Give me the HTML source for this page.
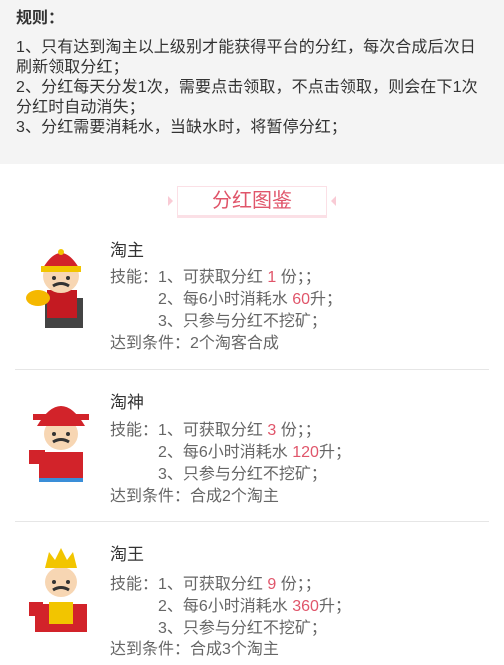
<!DOCTYPE html>
<html><head><meta charset="utf-8"><style>
*{margin:0;padding:0;box-sizing:border-box}
body{width:504px;height:665px;overflow:hidden;background:#fff;font-family:"Liberation Sans","Noto Sans CJK SC",sans-serif;color:#333}
.rules{background:#f4f4f4;height:164px;padding:8px 16px 0 16px}
.rules h3{font-size:16px;font-weight:bold;line-height:22px;color:#333}
.rules p{font-size:16px;line-height:20px;margin-top:8px;color:#333;white-space:nowrap;letter-spacing:0.1px}
.head{position:relative;height:60px}
.box{position:absolute;left:177px;top:22px;width:150px;height:30px;border:1px solid #fbe0e6;text-align:center;color:#e0556a;font-size:20px;line-height:28px;box-shadow:0 2px 0 #fbe0e6}
.box:before,.box:after{content:"";position:absolute;top:9px;border:5px solid transparent}
.box:before{left:-10px;border-left-color:#f9cbd5}
.box:after{right:-10px;border-right-color:#f9cbd5}
.t{position:absolute;left:110px;font-size:17px;color:#333}
.l{position:absolute;left:110px;font-size:16px;color:#666;white-space:nowrap}
.l.i{left:158px}
.r{color:#e0556a}
.hr{position:absolute;left:15px;width:474px;height:1px;background:#e6e6e6}
svg{position:absolute}
</style></head><body>
<div class="rules"><h3>规则：</h3>
<p>1、只有达到淘主以上级别才能获得平台的分红，每次合成后次日<br>刷新领取分红；<br>2、分红每天分发1次，需要点击领取，不点击领取，则会在下1次<br>分红时自动消失；<br>3、分红需要消耗水，当缺水时，将暂停分红；</p></div>
<div class="head"><div class="box">分红图鉴</div></div>

<svg style="left:25px;top:240px" width="72" height="92" viewBox="0 0 72 92"><path d="M20 58h38v30H20z" fill="#444"/><rect x="22" y="50" width="30" height="28" fill="#c41a22"/><ellipse cx="36" cy="36" rx="18" ry="17" fill="#f7d6b3"/><path d="M18 28q18-30 36 0z" fill="#d2232a"/><rect x="16" y="26" width="40" height="6" fill="#f2c500"/><circle cx="36" cy="12" r="3" fill="#f2c500"/><path d="M28 46q8-5 16 0" stroke="#333" stroke-width="3" fill="none"/><circle cx="29" cy="38" r="2" fill="#333"/><circle cx="43" cy="38" r="2" fill="#333"/><ellipse cx="13" cy="58" rx="12" ry="8" fill="#f5b800"/></svg>
<div class="t" style="top:236px">淘主</div>
<div class="l" style="top:263px">技能：1、可获取分红 <span class="r">1</span> 份；；</div>
<div class="l i" style="top:285px">2、每6小时消耗水 <span class="r">60</span>升；</div>
<div class="l i" style="top:307px">3、只参与分红不挖矿；</div>
<div class="l" style="top:329px">达到条件：2个淘客合成</div>
<div class="hr" style="top:369px"></div>

<svg style="left:25px;top:392px" width="72" height="92" viewBox="0 0 72 92"><path d="M14 60h44v26H14z" fill="#d2232a"/><ellipse cx="36" cy="42" rx="17" ry="16" fill="#f7d6b3"/><path d="M12 34q24-40 48 0z" fill="#d2232a"/><rect x="8" y="22" width="56" height="6" fill="#d2232a"/><path d="M28 50q8-5 16 0" stroke="#333" stroke-width="3" fill="none"/><circle cx="29" cy="42" r="2" fill="#333"/><circle cx="43" cy="42" r="2" fill="#333"/><rect x="4" y="58" width="16" height="14" fill="#d2232a"/><path d="M14 86h44v4H14z" fill="#3a8ed8"/></svg>
<div class="t" style="top:388px">淘神</div>
<div class="l" style="top:416px">技能：1、可获取分红 <span class="r">3</span> 份；；</div>
<div class="l i" style="top:438px">2、每6小时消耗水 <span class="r">120</span>升；</div>
<div class="l i" style="top:460px">3、只参与分红不挖矿；</div>
<div class="l" style="top:482px">达到条件：合成2个淘主</div>
<div class="hr" style="top:521px"></div>

<svg style="left:25px;top:542px" width="72" height="92" viewBox="0 0 72 92"><path d="M10 62h52v28H10z" fill="#d2232a"/><rect x="24" y="60" width="24" height="22" fill="#f2c500"/><ellipse cx="36" cy="40" rx="16" ry="15" fill="#f7d6b3"/><path d="M20 26l4-16 6 8 6-12 6 12 6-8 4 16z" fill="#f2c500"/><path d="M28 48q8-5 16 0" stroke="#333" stroke-width="3" fill="none"/><circle cx="29" cy="40" r="2" fill="#333"/><circle cx="43" cy="40" r="2" fill="#333"/><rect x="4" y="60" width="14" height="14" fill="#d2232a"/></svg>
<div class="t" style="top:540px">淘王</div>
<div class="l" style="top:570px">技能：1、可获取分红 <span class="r">9</span> 份；；</div>
<div class="l i" style="top:592px">2、每6小时消耗水 <span class="r">360</span>升；</div>
<div class="l i" style="top:614px">3、只参与分红不挖矿；</div>
<div class="l" style="top:635px">达到条件：合成3个淘主</div>
</body></html>
